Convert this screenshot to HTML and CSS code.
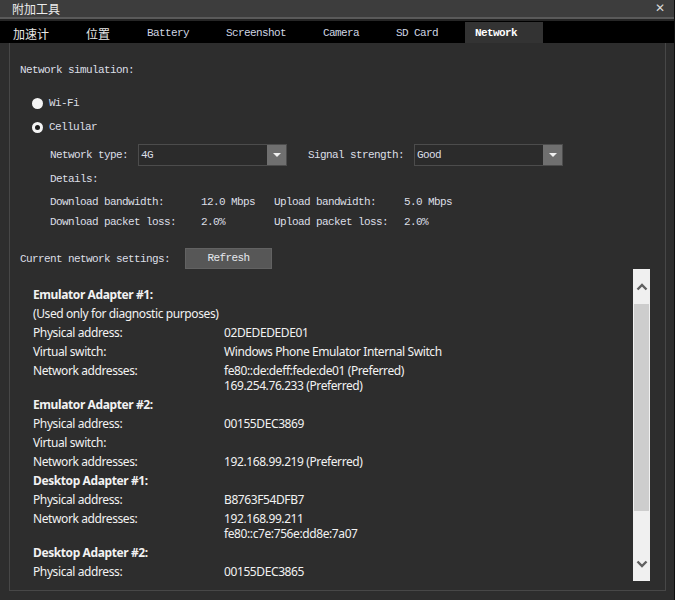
FILE: index.html
```html
<!DOCTYPE html>
<html>
<head>
<meta charset="utf-8">
<link rel="stylesheet" href="styles.css">
</head>
<body>
<div class="window">
  <div class="titlebar">
    <span class="title">附加工具</span>
    <span class="close">✕</span>
  </div>
  <div class="sep"></div>
  <div class="tabs">
    <div class="tab cn">加速计</div>
    <div class="tab cn">位置</div>
    <div class="tab">Battery</div>
    <div class="tab">Screenshot</div>
    <div class="tab">Camera</div>
    <div class="tab">SD Card</div>
    <div class="tab active">Network</div>
  </div>
  <div class="main">
    <div class="panel">
      <div class="mono sim-title">Network simulation:</div>
      <div class="radios">
        <div class="radio-row mono"><span class="radio"></span>Wi-Fi</div>
        <div class="radio-row mono"><span class="radio checked"></span>Cellular</div>
      </div>
      <div class="cell-opts mono">
        <div class="select-row">
          <span class="sel-label">Network type:</span>
          <div class="select"><span class="val">4G</span><span class="arrow"><span class="tri"></span></span></div>
          <span class="sel-label second">Signal strength:</span>
          <div class="select"><span class="val">Good</span><span class="arrow"><span class="tri"></span></span></div>
        </div>
        <div class="details-title">Details:</div>
        <div class="details">
          <span>Download bandwidth:</span><span>12.0 Mbps</span><span>Upload bandwidth:</span><span>5.0 Mbps</span>
          <span>Download packet loss:</span><span>2.0%</span><span>Upload packet loss:</span><span>2.0%</span>
        </div>
      </div>
      <div class="current mono">
        <span>Current network settings:</span>
        <div class="btn">Refresh</div>
      </div>
      <div class="list-wrap">
        <div class="list">
          <div class="head">Emulator Adapter #1:</div>
          <div class="full">(Used only for diagnostic purposes)</div>
          <div>Physical address:</div><div>02DEDEDEDE01</div>
          <div>Virtual switch:</div><div>Windows Phone Emulator Internal Switch</div>
          <div>Network addresses:</div><div><div>fe80::de:deff:fede:de01 (Preferred)</div><div>169.254.76.233 (Preferred)</div></div>
          <div class="head">Emulator Adapter #2:</div>
          <div>Physical address:</div><div>00155DEC3869</div>
          <div>Virtual switch:</div><div></div>
          <div>Network addresses:</div><div>192.168.99.219 (Preferred)</div>
          <div class="head">Desktop Adapter #1:</div>
          <div>Physical address:</div><div>B8763F54DFB7</div>
          <div>Network addresses:</div><div><div>192.168.99.211</div><div>fe80::c7e:756e:dd8e:7a07</div></div>
          <div class="head">Desktop Adapter #2:</div>
          <div>Physical address:</div><div>00155DEC3865</div>
        </div>
        <div class="scrollbar">
          <div class="sb-btn">
            <svg width="12" height="8" viewBox="0 0 12 8"><path d="M1.5 6.5 L6 2 L10.5 6.5" fill="none" stroke="#606060" stroke-width="2.4"/></svg>
          </div>
          <div class="sb-track"><div class="sb-thumb"></div></div>
          <div class="sb-btn">
            <svg width="12" height="8" viewBox="0 0 12 8"><path d="M1.5 1.5 L6 6 L10.5 1.5" fill="none" stroke="#606060" stroke-width="2.4"/></svg>
          </div>
        </div>
      </div>
    </div>
  </div>
</div>
</body>
</html>
```

FILE: styles.css
```css
html, body {
  margin: 0;
  padding: 0;
}
body {
  width: 675px;
  height: 600px;
  overflow: hidden;
  background: #2d2d2d;
}
.window {
  width: 675px;
  height: 600px;
  box-sizing: border-box;
  border-right: 1px solid #0e0e0e;
  display: flex;
  flex-direction: column;
}
.titlebar {
  flex: 0 0 auto;
  height: 17px;
  background: #3d3d3d;
  border-bottom: 2px solid #5a5a5a;
  display: flex;
  align-items: center;
  justify-content: space-between;
  padding: 0 9px 0 12px;
  color: #ececec;
  font: 12px/17px "Noto Sans CJK SC", sans-serif;
}
.close {
  font: 12px/17px "DejaVu Sans", sans-serif;
  color: #d8d8d8;
}
.sep {
  flex: 0 0 auto;
  height: 2px;
  background: #262626;
}
.tabs {
  flex: 0 0 auto;
  height: 22px;
  background: #000;
  display: flex;
  align-items: flex-end;
  padding-left: 3px;
}
.tab {
  height: 21px;
  display: flex;
  align-items: center;
  padding: 0 27px 0 10px;
  color: #cfd6e2;
  font: 11px "Liberation Mono", monospace;
  letter-spacing: -0.6px;
}
.tab.cn {
  font: 12px "Noto Sans CJK SC", sans-serif;
  letter-spacing: 0;
  color: #e8e8e8;
  padding-top: 1px;
  box-sizing: border-box;
}
.tab.active {
  background: #333333;
  color: #ffffff;
  font-weight: bold;
  padding-right: 26px;
}
.main {
  flex: 1 1 0;
  min-height: 0;
  padding: 0 8px 9px 9px;
  display: flex;
}
.panel {
  width: 657px;
  min-height: 0;
  box-sizing: border-box;
  border: 1px solid #474747;
  border-top: none;
  padding: 20px 15px 9px 10px;
  display: flex;
  flex-direction: column;
  overflow: hidden;
}
.panel > * {
  flex-shrink: 0;
}
.mono {
  font: 11px/14px "Liberation Mono", monospace;
  letter-spacing: -0.6px;
  color: #dcdfe6;
}
.radios {
  margin-top: 19px;
  padding-left: 12px;
  display: flex;
  flex-direction: column;
  gap: 10px;
}
.radio-row {
  display: flex;
  align-items: center;
  gap: 6px;
}
.radio {
  width: 11px;
  height: 11px;
  border-radius: 50%;
  background: #f4f4f4;
  display: flex;
  align-items: center;
  justify-content: center;
}
.radio.checked::after {
  content: "";
  width: 5px;
  height: 5px;
  border-radius: 50%;
  background: #1c1c1c;
}
.cell-opts {
  margin-top: 10px;
  padding-left: 30px;
}
.select-row {
  display: flex;
  align-items: center;
}
.sel-label {
  width: 88px;
}
.sel-label.second {
  margin-left: 21px;
  width: 106px;
}
.select {
  width: 149px;
  height: 22px;
  box-sizing: border-box;
  border: 1px solid #4c4c4c;
  background: #2b2b2b;
  display: flex;
}
.select .val {
  flex: 1;
  padding-left: 2px;
  line-height: 20px;
}
.select .arrow {
  width: 19px;
  background: #6f6f6f;
  display: flex;
  align-items: center;
  justify-content: center;
}
.tri {
  width: 0;
  height: 0;
  border-left: 4px solid transparent;
  border-right: 4px solid transparent;
  border-top: 4px solid #f0f0f0;
}
.details-title {
  margin-top: 6px;
}
.details {
  margin-top: 9px;
  display: grid;
  grid-template-columns: 151px 73px 130px auto;
  row-gap: 6px;
}
.current {
  margin-top: 19px;
  display: flex;
  align-items: center;
  gap: 15px;
}
.btn {
  width: 87px;
  height: 21px;
  box-sizing: border-box;
  background: #575757;
  border: 1px solid #626262;
  text-align: center;
  line-height: 19px;
  color: #e6e9ef;
}
.panel > .list-wrap {
  flex: 1 1 0;
  min-height: 0;
  display: flex;
  overflow: hidden;
}
.list {
  flex: 1;
  min-height: 0;
  padding: 18px 0 0 13px;
  display: grid;
  grid-template-columns: 191px 1fr;
  grid-auto-rows: min-content;
  align-content: start;
  row-gap: 4px;
  font: 12px/15px "Noto Sans", sans-serif;
  letter-spacing: -0.4px;
  color: #f2f2f2;
  overflow: hidden;
}
.list .head {
  grid-column: 1 / 3;
  font-weight: bold;
}
.list .full {
  grid-column: 1 / 3;
}
.scrollbar {
  width: 17px;
  height: 312px;
  flex-shrink: 0;
  background: #f0f0f0;
  display: flex;
  flex-direction: column;
}
.sb-btn {
  height: 35px;
  display: flex;
  align-items: center;
  justify-content: center;
}
.sb-track {
  flex: 1;
  padding: 0 1px;
}
.sb-thumb {
  height: 207px;
  background: #cdcdcd;
}
```
